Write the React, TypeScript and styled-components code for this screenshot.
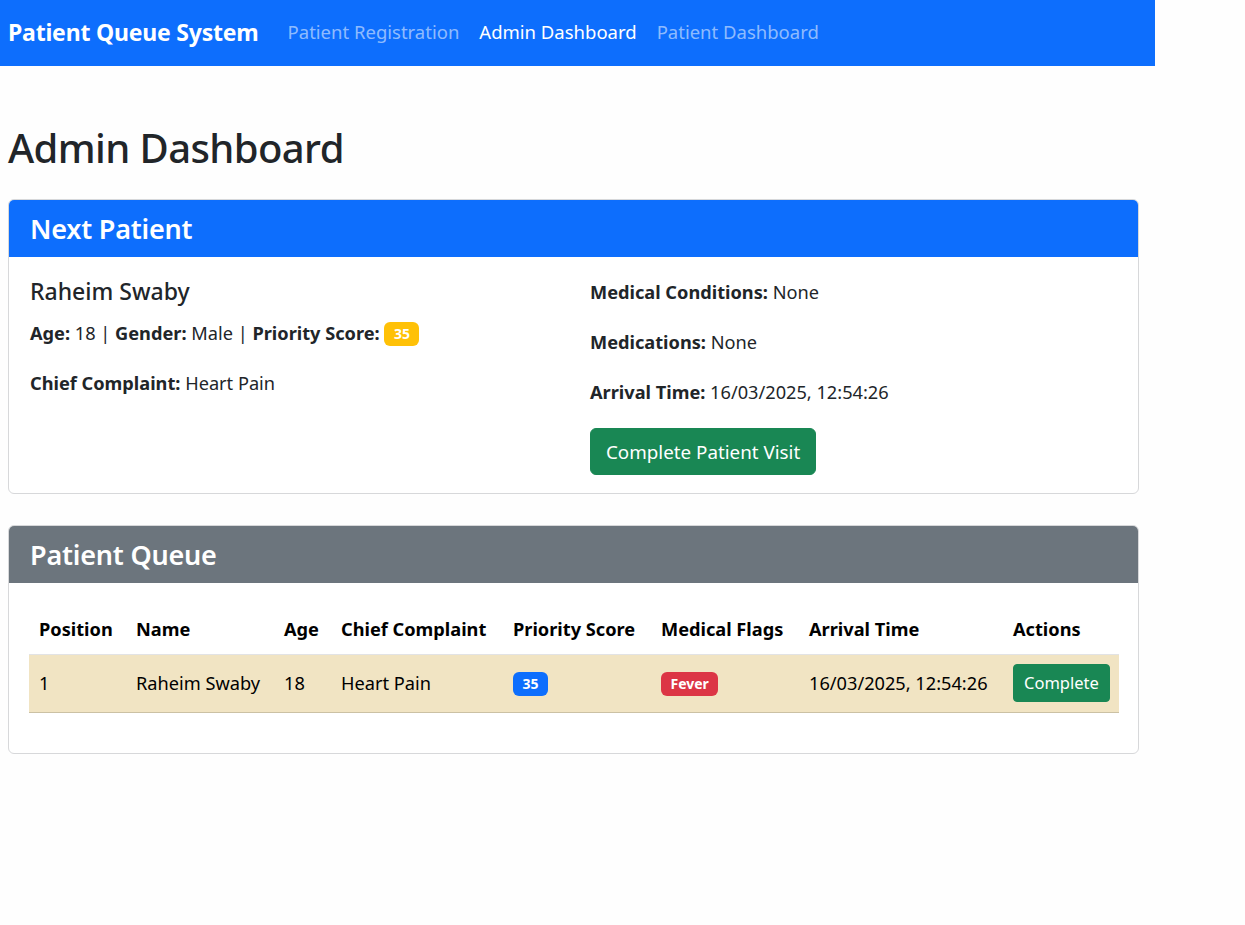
import React from 'react';
import styled, { createGlobalStyle } from 'styled-components';

const GlobalStyle = createGlobalStyle`
  html, body {
    margin: 0;
    padding: 0;
    background: #fefefe;
    font-family: "Noto Sans", "Open Sans", sans-serif;
    font-size: 19.2px;
    color: #212529;
  }
  * { box-sizing: border-box; }
`;

const Page = styled.div`
  width: 1155px;
`;

const Navbar = styled.nav`
  height: 66px;
  background: #0d6efd;
  display: flex;
  align-items: center;
  padding: 0 8px 3px 8px;
`;

const Brand = styled.div`
  font-size: 23px;
  font-weight: 700;
  color: #fff;
  margin-right: 19px;
  letter-spacing: -0.2px;
`;

const NavLinks = styled.div`
  display: flex;
  align-items: center;
`;

const NavLink = styled.a<{ $active?: boolean }>`
  padding: 0 10px;
  font-size: 18.5px;
  color: ${(p) => (p.$active ? '#fff' : 'rgba(255,255,255,0.55)')};
  text-decoration: none;
  cursor: pointer;
`;

const Container = styled.main`
  padding: 58px 16px 0 8px;
  display: flex;
  flex-direction: column;
`;

const Title = styled.h1`
  margin: 0 0 27px 0;
  font-size: 40px;
  font-weight: 500;
  line-height: 1.2;
  letter-spacing: -0.6px;
`;

const Card = styled.section`
  border: 1px solid #d7d8da;
  border-radius: 6px;
  background: #fff;
  margin-bottom: 31px;
  overflow: hidden;
`;

const CardHeader = styled.div<{ $tone: 'primary' | 'secondary' }>`
  background: ${(p) => (p.$tone === 'primary' ? '#0d6efd' : '#6c757d')};
  color: #fff;
  height: 57px;
  display: flex;
  align-items: center;
  padding: 0 21px;
`;

const HeaderTitle = styled.h4`
  margin: 0;
  font-size: 27px;
  font-weight: 600;
  letter-spacing: -0.2px;
`;

const CardBody = styled.div<{ $bottom?: number; $side?: number }>`
  padding: 21px ${(p) => p.$side ?? 21}px ${(p) => p.$bottom ?? 20}px
    ${(p) => p.$side ?? 21}px;
`;

const Row = styled.div`
  display: grid;
  grid-template-columns: 1fr 1fr;
  column-gap: 33px;
`;

const Col = styled.div`
  display: flex;
  flex-direction: column;
  align-items: flex-start;
`;

const PatientName = styled.h5`
  margin: 0 0 13px 0;
  font-size: 23px;
  font-weight: 500;
  line-height: 1.2;
`;

const Info = styled.p`
  margin: 0 0 21px 0;
  font-size: 18.2px;
  line-height: 29px;
  b { font-weight: 700; }
`;

const Badge = styled.span<{ $bg: string; $fg?: string }>`
  display: inline-block;
  background: ${(p) => p.$bg};
  color: ${(p) => p.$fg || '#fff'};
  font-size: 14px;
  font-weight: 700;
  line-height: 1;
  padding: 5px 9.5px;
  border-radius: 6px;
  vertical-align: 1px;
`;

const Button = styled.button<{ $small?: boolean }>`
  background: #198754;
  color: #fff;
  border: 1px solid #198754;
  border-radius: ${(p) => (p.$small ? '4px' : '6px')};
  font-family: inherit;
  font-size: ${(p) => (p.$small ? '16.5px' : '18.8px')};
  line-height: 1.5;
  padding: ${(p) => (p.$small ? '5.5px 10px' : '8.5px 15px')};
  cursor: pointer;
`;

const Table = styled.table`
  width: 100%;
  table-layout: fixed;
  border-collapse: collapse;
  margin: 1px 0 20px 0;
  font-size: 18.2px;

  th {
    text-align: left;
    color: #000;
    font-weight: 700;
    padding: 10px 10px;
    height: 49px;
    border-bottom: 1px solid #e2e3e5;
    white-space: nowrap;
  }

  td {
    padding: 5px 10px;
    height: 58px;
    background: #f1e4c3;
    color: #000;
    border-bottom: 1px solid #cbc1a4;
    white-space: nowrap;
    vertical-align: middle;
  }
`;

const ColWidth = styled.col<{ $w: number }>`
  width: ${(p) => p.$w}px;
`;

type QueueEntry = {
  position: number;
  name: string;
  age: number;
  complaint: string;
  score: number;
  flags: string[];
  arrival: string;
};

const queue: QueueEntry[] = [
  {
    position: 1,
    name: 'Raheim Swaby',
    age: 18,
    complaint: 'Heart Pain',
    score: 35,
    flags: ['Fever'],
    arrival: '16/03/2025, 12:54:26',
  },
];

const columns = [
  { label: 'Position', w: 97 },
  { label: 'Name', w: 148 },
  { label: 'Age', w: 57 },
  { label: 'Chief Complaint', w: 172 },
  { label: 'Priority Score', w: 148 },
  { label: 'Medical Flags', w: 148 },
  { label: 'Arrival Time', w: 204 },
  { label: 'Actions', w: 116 },
];

export default function App() {
  const next = queue[0];
  return (
    <Page>
      <GlobalStyle />
      <Navbar>
        <Brand>Patient Queue System</Brand>
        <NavLinks>
          <NavLink>Patient Registration</NavLink>
          <NavLink $active>Admin Dashboard</NavLink>
          <NavLink>Patient Dashboard</NavLink>
        </NavLinks>
      </Navbar>

      <Container>
        <Title>Admin Dashboard</Title>

        <Card>
          <CardHeader $tone="primary">
            <HeaderTitle>Next Patient</HeaderTitle>
          </CardHeader>
          <CardBody $bottom={18}>
            <Row>
              <Col>
                <PatientName>{next.name}</PatientName>
                <Info>
                  <b>Age:</b> {next.age} | <b>Gender:</b> Male | <b>Priority Score:</b>{' '}
                  <Badge $bg="#ffc107">{next.score}</Badge>
                </Info>
                <Info>
                  <b>Chief Complaint:</b> {next.complaint}
                </Info>
              </Col>
              <Col>
                <Info>
                  <b>Medical Conditions:</b> None
                </Info>
                <Info>
                  <b>Medications:</b> None
                </Info>
                <Info>
                  <b>Arrival Time:</b> {next.arrival}
                </Info>
                <Button>Complete Patient Visit</Button>
              </Col>
            </Row>
          </CardBody>
        </Card>

        <Card>
          <CardHeader $tone="secondary">
            <HeaderTitle>Patient Queue</HeaderTitle>
          </CardHeader>
          <CardBody $side={20}>
            <Table>
              <colgroup>
                {columns.map((c) => (
                  <ColWidth key={c.label} $w={c.w} />
                ))}
              </colgroup>
              <thead>
                <tr>
                  {columns.map((c) => (
                    <th key={c.label}>{c.label}</th>
                  ))}
                </tr>
              </thead>
              <tbody>
                {queue.map((q) => (
                  <tr key={q.position}>
                    <td>{q.position}</td>
                    <td>{q.name}</td>
                    <td>{q.age}</td>
                    <td>{q.complaint}</td>
                    <td>
                      <Badge $bg="#0d6efd">{q.score}</Badge>
                    </td>
                    <td>
                      {q.flags.map((f) => (
                        <Badge key={f} $bg="#dc3545">
                          {f}
                        </Badge>
                      ))}
                    </td>
                    <td>{q.arrival}</td>
                    <td>
                      <Button $small>Complete</Button>
                    </td>
                  </tr>
                ))}
              </tbody>
            </Table>
          </CardBody>
        </Card>
      </Container>
    </Page>
  );
}
